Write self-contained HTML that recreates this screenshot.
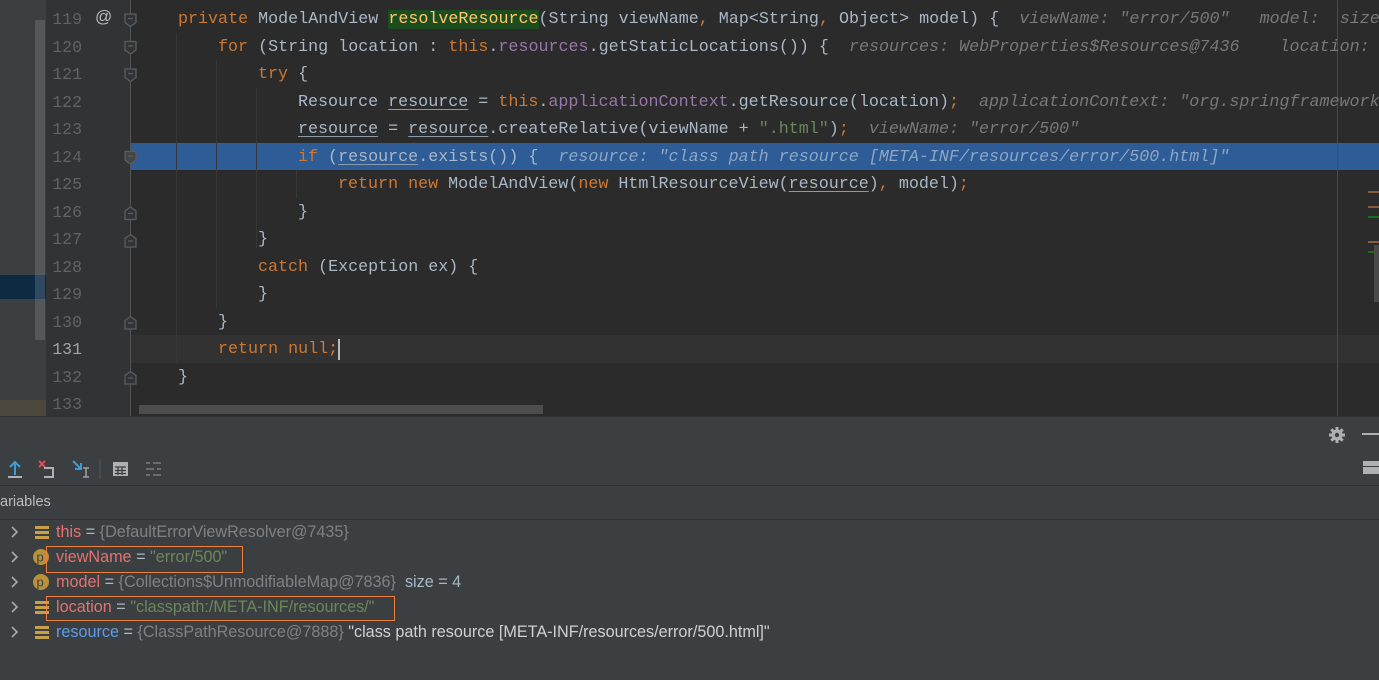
<!DOCTYPE html>
<html><head><meta charset="utf-8"><style>
*{margin:0;padding:0;box-sizing:border-box}
body{width:1379px;height:680px;overflow:hidden;background:#3c3f41;position:relative;font-family:"Liberation Sans",sans-serif}
.abs{position:absolute}
.code{font-family:"Liberation Mono",monospace;font-size:16.7px;white-space:pre;color:#a9b7c6;line-height:27.5px;height:27.5px}
.k{color:#cc7832}.f{color:#9876aa}.s{color:#6a8759}.u{text-decoration:underline;text-decoration-color:#8a9aa8;text-underline-offset:3px}
.h{color:#787878;font-style:italic}
.sel .h{color:#8ea6c4}
.ln{font-family:"Liberation Mono",monospace;font-size:16.5px;color:#606366;width:36px;text-align:right;left:46px;line-height:27.5px}
.var{font-size:16.2px;line-height:25px;color:#a9b7c6;white-space:pre}
</style></head><body>
<div class="abs" style="left:0;top:0;width:46px;height:416px;background:#3c3f41"></div>
<div class="abs" style="left:35px;top:20px;width:10px;height:320px;background:#55585a"></div>
<div class="abs" style="left:0;top:275px;width:46px;height:24px;background:#0d2a42"></div>
<div class="abs" style="left:35px;top:275px;width:10px;height:24px;background:#2f4a60"></div>
<div class="abs" style="left:0;top:400px;width:46px;height:16px;background:#4c473c"></div>
<div class="abs" style="left:46px;top:0;width:85px;height:416px;background:#313335"></div>
<div class="abs" style="left:130px;top:0;width:1px;height:416px;background:#555"></div>
<div class="abs" style="left:131px;top:0;width:1248px;height:416px;background:#2b2b2b"></div>
<div class="abs" style="left:131px;top:335px;width:1248px;height:28px;background:#323232"></div>
<div class="abs" style="left:131px;top:143px;width:1248px;height:27px;background:#2d5c96"></div>
<div class="abs" style="left:1337px;top:0;width:1px;height:416px;background:#4a4a4a"></div>
<div class="abs" style="left:176px;top:33px;width:1px;height:330px;background:#373737"></div>
<div class="abs" style="left:216px;top:60px;width:1px;height:248px;background:#373737"></div>
<div class="abs" style="left:256px;top:88px;width:1px;height:160px;background:#373737"></div>
<div class="abs" style="left:296px;top:170px;width:1px;height:28px;background:#373737"></div>
<div class="abs" style="left:139px;top:405px;width:404px;height:9px;background:#4d4d4d"></div>
<div class="abs" style="left:1368px;top:191px;width:11px;height:2px;background:#8a5a3e"></div>
<div class="abs" style="left:1368px;top:206px;width:11px;height:2px;background:#8a5a3e"></div>
<div class="abs" style="left:1368px;top:216px;width:11px;height:2px;background:#1b6e1b"></div>
<div class="abs" style="left:1368px;top:241px;width:11px;height:2px;background:#8a5a3e"></div>
<div class="abs" style="left:1368px;top:251px;width:11px;height:2px;background:#1b6e1b"></div>
<div class="abs" style="left:1374px;top:245px;width:5px;height:57px;background:#4a4a4a"></div>

<div class="abs ln" style="top:6px">119</div>
<div class="abs ln" style="top:33.5px">120</div>
<div class="abs ln" style="top:61px">121</div>
<div class="abs ln" style="top:88.5px">122</div>
<div class="abs ln" style="top:116px">123</div>
<div class="abs ln" style="top:143.5px">124</div>
<div class="abs ln" style="top:171px">125</div>
<div class="abs ln" style="top:198.5px">126</div>
<div class="abs ln" style="top:226px">127</div>
<div class="abs ln" style="top:253.5px">128</div>
<div class="abs ln" style="top:281px">129</div>
<div class="abs ln" style="top:308.5px">130</div>
<div class="abs ln" style="top:336px;color:#a4a3a3">131</div>
<div class="abs ln" style="top:363.5px">132</div>
<div class="abs ln" style="top:391px">133</div>
<div class="abs" style="left:95px;top:7px;color:#bbb;font-size:17px">@</div>
<svg class="abs" style="left:0;top:0" width="140" height="416">
<g fill="#313335" stroke="#5a5d60" stroke-width="1.3">
<path d="M125 14h11v8.5l-5.5 4l-5.5-4z"/><path d="M128 18.5h5"/>
<path d="M125 41.5h11v8.5l-5.5 4l-5.5-4z"/><path d="M128 46h5"/>
<path d="M125 69h11v8.5l-5.5 4l-5.5-4z"/><path d="M128 73.5h5"/>
<path d="M125 151.5h11v8.5l-5.5 4l-5.5-4z" fill="#444"/><path d="M128 156h5"/>
<path d="M125 219.5v-8.5l5.5-4l5.5 4v8.5z"/><path d="M128 213.5h5"/>
<path d="M125 247v-8.5l5.5-4l5.5 4v8.5z"/><path d="M128 241h5"/>
<path d="M125 329v-8.5l5.5-4l5.5 4v8.5z"/><path d="M128 323h5"/>
<path d="M125 384v-8.5l5.5-4l5.5 4v8.5z"/><path d="M128 378h5"/>
</g></svg>

<div class="abs code" style="left:178px;top:6px"><span class="k">private </span>ModelAndView <span style="background:#1d4d1f;color:#ffc66d">resolveResource</span>(String viewName<span class="k">, </span>Map&lt;String<span class="k">, </span>Object&gt; model) {  <span class="h">viewName: "error/500"   model:  size</span></div>
<div class="abs code" style="left:218px;top:33.5px"><span class="k">for </span>(String location : <span class="k">this</span>.<span class="f">resources</span>.getStaticLocations()) {  <span class="h">resources: WebProperties$Resources@7436    location: </span></div>
<div class="abs code" style="left:258px;top:61px"><span class="k">try </span>{</div>
<div class="abs code" style="left:298px;top:88.5px">Resource <span class="u">resource</span> = <span class="k">this</span>.<span class="f">applicationContext</span>.getResource(location)<span class="k">;</span>  <span class="h">applicationContext: "org.springframework</span></div>
<div class="abs code" style="left:298px;top:116px"><span class="u">resource</span> = <span class="u">resource</span>.createRelative(viewName + <span class="s">".html"</span>)<span class="k">;</span>  <span class="h">viewName: "error/500"</span></div>
<div class="abs code sel" style="left:298px;top:143.5px"><span class="k">if </span>(<span class="u">resource</span>.exists()) {  <span class="h">resource: "class path resource [META-INF/resources/error/500.html]"</span></div>
<div class="abs code" style="left:338px;top:171px"><span class="k">return new </span>ModelAndView(<span class="k">new </span>HtmlResourceView(<span class="u">resource</span>)<span class="k">, </span>model)<span class="k">;</span></div>
<div class="abs code" style="left:298px;top:198.5px">}</div>
<div class="abs code" style="left:258px;top:226px">}</div>
<div class="abs code" style="left:258px;top:253.5px"><span class="k">catch </span>(Exception ex) {</div>
<div class="abs code" style="left:258px;top:281px">}</div>
<div class="abs code" style="left:218px;top:308.5px">}</div>
<div class="abs code" style="left:218px;top:336px"><span class="k">return null;</span></div>
<div class="abs" style="left:338px;top:339px;width:2px;height:21px;background:#bbb"></div>
<div class="abs code" style="left:178px;top:363.5px">}</div>

<div class="abs" style="left:0;top:416px;width:1379px;height:1px;background:#323232"></div>
<svg class="abs" style="left:1327px;top:425px" width="20" height="20"><g stroke="#aeb0b2" stroke-width="3"><path d="M10 2v16M2 10h16M4.3 4.3l11.4 11.4M15.7 4.3L4.3 15.7"/></g><circle cx="10" cy="10" r="5.5" fill="#aeb0b2"/><circle cx="10" cy="10" r="2.2" fill="#3c3f41"/></svg>
<div class="abs" style="left:1362px;top:433px;width:17px;height:2px;background:#aeb0b2"></div>
<div class="abs" style="left:1363px;top:461px;width:16px;height:13px;background:#aeb0b2"></div>
<div class="abs" style="left:1363px;top:466px;width:16px;height:1px;background:#3c3f41"></div>
<svg class="abs" style="left:0;top:455px" width="170" height="28">
<path d="M15 20V8M10 12l5-5l5 5" stroke="#3d9bd8" stroke-width="2" fill="none"/><path d="M8 22h14" stroke="#aeb0b2" stroke-width="2"/>
<path d="M39 6l6 6M45 6l-6 6" stroke="#d95050" stroke-width="2"/><path d="M44 13h9v9h-9" stroke="#aeb0b2" stroke-width="2" fill="none"/>
<path d="M73 6l8 8M81 8v6h-6" stroke="#3d9bd8" stroke-width="2" fill="none"/><path d="M86 13v9M83 13h6M83 22h6" stroke="#aeb0b2" stroke-width="1.3"/>
<path d="M100 4v20" stroke="#555" stroke-width="1"/>
<rect x="113" y="7" width="15" height="14" fill="#aeb0b2"/><path d="M115 12h11M115 15.5h11M115 18.5h11M118 12v8M122 12v8" stroke="#3c3f41" stroke-width="1.3"/>
<path d="M146 8h4M153 8h8M146 14h8M157 14h4M146 20h4M153 20h8" stroke="#6a6c6e" stroke-width="2"/>
</svg>
<div class="abs" style="left:0;top:485px;width:1379px;height:1px;background:#323232"></div>
<div class="abs" style="left:0;top:494px;font-size:14.5px;color:#bbb">ariables</div>
<div class="abs" style="left:0;top:519px;width:1379px;height:1px;background:#323232"></div>

<svg class="abs" style="left:0;top:520px" width="60" height="130">
<g stroke="#aaa" stroke-width="1.6" fill="none">
<path d="M12 7l5 5l-5 5"/><path d="M12 32l5 5l-5 5"/><path d="M12 57l5 5l-5 5"/><path d="M12 82l5 5l-5 5"/><path d="M12 107l5 5l-5 5"/>
</g>
<g fill="#c8a048"><rect x="35" y="6" width="14" height="3"/><rect x="35" y="11" width="14" height="3"/><rect x="35" y="16" width="14" height="3"/>
<rect x="35" y="81" width="14" height="3"/><rect x="35" y="86" width="14" height="3"/><rect x="35" y="91" width="14" height="3"/>
<rect x="35" y="106" width="14" height="3"/><rect x="35" y="111" width="14" height="3"/><rect x="35" y="116" width="14" height="3"/>
<circle cx="41" cy="37" r="8" fill="#b8913a"/><circle cx="41" cy="62" r="8" fill="#b8913a"/></g>
<text x="36.5" y="41.5" font-size="13" fill="#3c3f41" font-family="Liberation Sans">p</text>
<text x="36.5" y="66.5" font-size="13" fill="#3c3f41" font-family="Liberation Sans">p</text>
</svg>
<div class="abs var" style="left:56px;top:520px"><span style="color:#e27272">this</span> = <span style="color:#808080">{DefaultErrorViewResolver@7435}</span></div>
<div class="abs var" style="left:56px;top:545px"><span style="color:#e27272">viewName</span> = <span class="s">"error/500"</span></div>
<div class="abs var" style="left:56px;top:570px"><span style="color:#e27272">model</span> = <span style="color:#808080">{Collections$UnmodifiableMap@7836}</span>  size = 4</div>
<div class="abs var" style="left:56px;top:595px"><span style="color:#e27272">location</span> = <span class="s">"classpath:/META-INF/resources/"</span></div>
<div class="abs var" style="left:56px;top:620px"><span style="color:#5c9ce8">resource</span> = <span style="color:#808080">{ClassPathResource@7888}</span> <span style="color:#d0d0d0">"class path resource [META-INF/resources/error/500.html]"</span></div>
<div class="abs" style="left:46px;top:546px;width:197px;height:27px;border:1.5px solid #f07f3a"></div>
<div class="abs" style="left:46px;top:596px;width:349px;height:25px;border:1.5px solid #f07f3a"></div>
</body></html>
